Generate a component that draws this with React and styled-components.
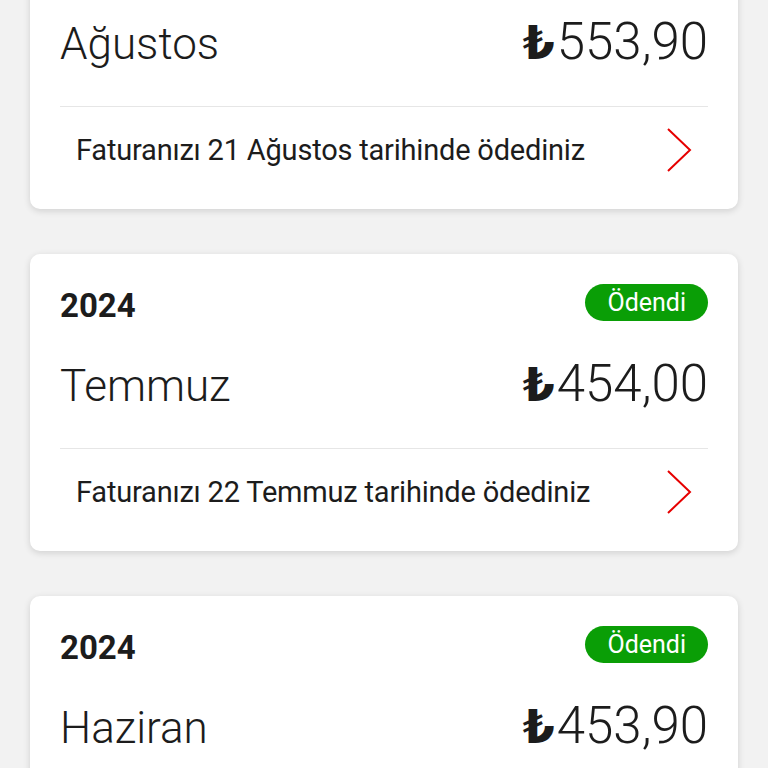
import React from 'react';
import styled, { createGlobalStyle } from 'styled-components';

const GlobalStyle = createGlobalStyle`
	html, body {
		margin: 0;
		padding: 0;
		background: #f2f2f2;
		font-family: Roboto, 'Noto Sans', sans-serif;
		color: #1c1c1c;
		overflow: hidden;
	}
`;

const List = styled.div`
	display: flex;
	flex-direction: column;
	gap: 45px;
	padding: 0 30px;
	margin-top: -88px;
`;

const Card = styled.div`
	background: #fff;
	border-radius: 10px;
	box-shadow: 0 2px 7px rgba(0, 0, 0, 0.14);
	padding: 0 30px;
	display: flex;
	flex-direction: column;
`;

const TopRow = styled.div`
	display: flex;
	justify-content: space-between;
	align-items: center;
	padding-top: 30px;
	height: 37px;
`;

const Year = styled.div`
	font-size: 33px;
	font-weight: 700;
	line-height: 1;
	margin-top: 6px;
`;

const Badge = styled.div`
	background: #0a9e06;
	color: #fff;
	font-size: 25px;
	line-height: 37px;
	height: 37px;
	padding: 0 22px;
	border-radius: 19px;
`;

const AmountRow = styled.div`
	display: flex;
	justify-content: space-between;
	align-items: baseline;
	padding: 37px 0 39px;
	border-bottom: 1px solid #e6e6e6;
`;

const Month = styled.div`
	font-size: 44px;
	font-weight: 300;
	line-height: 1;
`;

const Price = styled.div`
	font-size: 51px;
	font-weight: 300;
	line-height: 1;
`;

const Lira = styled.span`
	font-family: 'DejaVu Sans', sans-serif;
	font-weight: 700;
	font-size: 46px;
	margin-right: 2px;
`;

const Footer = styled.div`
	display: flex;
	justify-content: space-between;
	align-items: center;
	height: 102px;
	padding: 0 16px;
	box-sizing: border-box;
`;

const FooterText = styled.div`
	font-size: 29px;
	font-weight: 400;
	letter-spacing: -0.2px;
	margin-top: -16px;
`;

const ChevronIcon = styled.svg`
	margin-top: -16px;
	flex-shrink: 0;
`;

const Chevron = () => (
	<ChevronIcon width="26" height="44" viewBox="0 0 26 44">
		<path d="M2 1 L24 22 L2 43" fill="none" stroke="#e60000" strokeWidth="2" />
	</ChevronIcon>
);

const bills = [
	{ year: '2024', month: 'Ağustos', amount: '553,90', day: '21' },
	{ year: '2024', month: 'Temmuz', amount: '454,00', day: '22' },
	{ year: '2024', month: 'Haziran', amount: '453,90', day: '21' },
];

const BillCard = ({ bill }) => (
	<Card>
		<TopRow>
			<Year>{bill.year}</Year>
			<Badge>Ödendi</Badge>
		</TopRow>
		<AmountRow>
			<Month>{bill.month}</Month>
			<Price>
				<Lira>₺</Lira>
				{bill.amount}
			</Price>
		</AmountRow>
		<Footer>
			<FooterText>
				Faturanızı {bill.day} {bill.month} tarihinde ödediniz
			</FooterText>
			<Chevron />
		</Footer>
	</Card>
);

const App = () => (
	<>
		<GlobalStyle />
		<List>
			{bills.map((b) => (
				<BillCard key={b.month} bill={b} />
			))}
		</List>
	</>
);

export default App;
